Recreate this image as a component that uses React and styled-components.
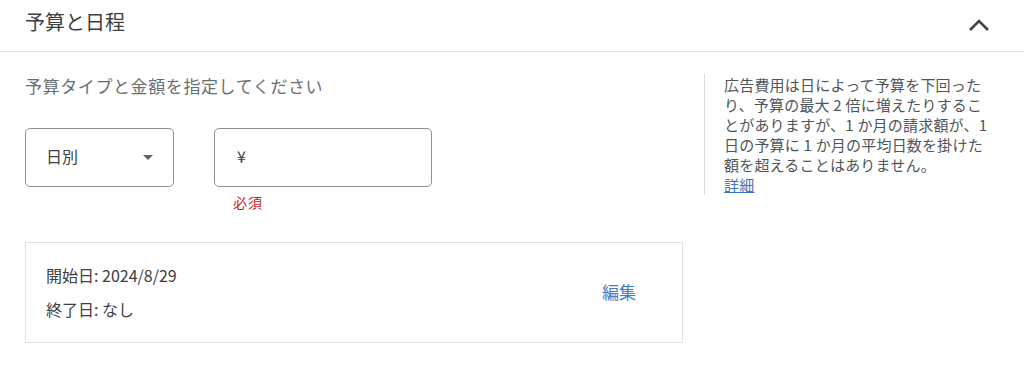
import React from "react"
import styled, { createGlobalStyle } from "styled-components"

const GlobalStyle = createGlobalStyle`
  html, body {
    margin: 0;
    padding: 0;
    background: #ffffff;
  }
  body {
    font-family: "Noto Sans CJK JP", "Noto Sans", sans-serif;
    color: #3c4043;
  }
`

const Panel = styled.section`
  width: 1024px;
  height: 390px;
  background: #ffffff;
`

const Header = styled.header`
  height: 52px;
  box-sizing: border-box;
  padding: 0 33px 8px 25px;
  display: flex;
  align-items: center;
  justify-content: space-between;
  border-bottom: 1.5px solid #e3e3e3;
`

const Title = styled.h2`
  margin: 0;
  font-size: 20px;
  font-weight: 400;
  line-height: 28px;
  color: #3c4043;
`

const Chevron = styled.button`
  border: 0;
  background: none;
  padding: 0;
  width: 24px;
  height: 24px;
  display: flex;
  align-items: center;
  justify-content: center;
  margin-top: 6px;
`

const Body = styled.div`
  display: grid;
  grid-template-columns: 658px 1fr;
  column-gap: 21px;
  padding: 20px 0 0 25px;
`

const Main = styled.div`
  display: flex;
  flex-direction: column;
`

const Prompt = styled.p`
  margin: 2px 0 30px;
  font-size: 17px;
  letter-spacing: 0.6px;
  line-height: 24px;
  color: #6b6f73;
`

const Fields = styled.div`
  display: flex;
  gap: 40px;
  align-items: flex-start;
`

const Field = styled.div`
  display: flex;
  flex-direction: column;
`

const Box = styled.div`
  width: ${(p) => p.$width}px;
  height: 59px;
  box-sizing: border-box;
  border: 1px solid #8d9196;
  border-radius: 5px;
  display: flex;
  align-items: center;
  justify-content: space-between;
  padding: 0 20px 3px ${(p) => p.$pad}px;
  font-size: 16px;
  color: #3c4043;
`

const Arrow = styled.span`
  width: 0;
  height: 0;
  border-left: 5px solid transparent;
  border-right: 5px solid transparent;
  border-top: 5px solid #5f6368;
  margin-top: 2px;
`

const Error = styled.span`
  margin: 6px 0 0 19px;
  font-size: 14px;
  letter-spacing: 1px;
  line-height: 18px;
  color: #c5221f;
`

const Schedule = styled.div`
  margin-top: 31px;
  height: 101px;
  box-sizing: border-box;
  border: 1px solid #e2e2e2;
  display: flex;
  align-items: center;
  justify-content: space-between;
  padding: 0 46px 0 20px;
`

const Dates = styled.div`
  display: flex;
  flex-direction: column;
  gap: 12px;
  margin-top: -1px;
`

const DateLine = styled.div`
  font-size: 16px;
  line-height: 22px;
  color: #3c4043;
`

const EditLink = styled.a`
  font-size: 17px;
  color: #3f7bc8;
  text-decoration: none;
  margin-bottom: 3px;
`

const Aside = styled.aside`
  margin-top: 2px;
  height: 120px;
  border-left: 1.5px solid #dadce0;
  padding: 1px 0 0 19px;
  font-size: 15px;
  letter-spacing: 0.2px;
  line-height: 20px;
  color: #50555a;
  white-space: nowrap;
`

const More = styled.a`
  color: #3f73c0;
  text-decoration: underline;
`

export default function App() {
  return (
    <Panel>
      <GlobalStyle />
      <Header>
        <Title>予算と日程</Title>
        <Chevron aria-label="閉じる">
          <svg width="22" height="14" viewBox="0 0 22 14">
            <path d="M2 12 L11 3 L20 12" fill="none" stroke="#444" strokeWidth="2.6" />
          </svg>
        </Chevron>
      </Header>
      <Body>
        <Main>
          <Prompt>予算タイプと金額を指定してください</Prompt>
          <Fields>
            <Field>
              <Box $width={149} $pad={20}>
                <span>日別</span>
                <Arrow />
              </Box>
            </Field>
            <Field>
              <Box $width={218} $pad={22}>
                <span>¥</span>
              </Box>
              <Error>必須</Error>
            </Field>
          </Fields>
          <Schedule>
            <Dates>
              <DateLine>開始日: 2024/8/29</DateLine>
              <DateLine>終了日: なし</DateLine>
            </Dates>
            <EditLink href="#">編集</EditLink>
          </Schedule>
        </Main>
        <Aside>
          広告費用は日によって予算を下回った
          <br />
          り、予算の最大 2 倍に増えたりするこ
          <br />
          とがありますが、1 か月の請求額が、1
          <br />
          日の予算に 1 か月の平均日数を掛けた
          <br />
          額を超えることはありません。
          <br />
          <More href="#">詳細</More>
        </Aside>
      </Body>
    </Panel>
  )
}
